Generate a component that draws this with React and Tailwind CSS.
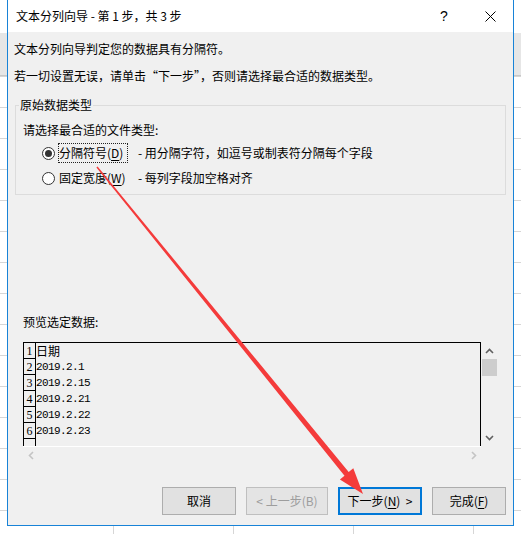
const Up = ({ c = "#606060" }) => (
  <svg width="9" height="6" viewBox="0 0 9 6"><path d="M1 5 L4.5 1.5 L8 5" stroke={c} strokeWidth="1.6" fill="none" /></svg>
);
const Down = ({ c = "#606060" }) => (
  <svg width="9" height="6" viewBox="0 0 9 6"><path d="M1 1 L4.5 4.5 L8 1" stroke={c} strokeWidth="1.6" fill="none" /></svg>
);
const Left = ({ c = "#c4c4c4" }) => (
  <svg width="6" height="9" viewBox="0 0 6 9"><path d="M5 1 L1.5 4.5 L5 8" stroke={c} strokeWidth="1.6" fill="none" /></svg>
);
const Right = ({ c = "#c4c4c4" }) => (
  <svg width="6" height="9" viewBox="0 0 6 9"><path d="M1 1 L4.5 4.5 L1 8" stroke={c} strokeWidth="1.6" fill="none" /></svg>
);

function Radio({ checked }) {
  return (
    <div className="w-[13px] h-[13px] rounded-full border border-[#333333] bg-white flex items-center justify-center shrink-0">
      {checked && <div className="w-[7px] h-[7px] rounded-full bg-[#333333]" />}
    </div>
  );
}

export default function App() {
  const rows = ["日期", "2019.2.1", "2019.2.15", "2019.2.21", "2019.2.22", "2019.2.23", ""];
  return (
    <div className="relative w-[521px] h-[534px] overflow-hidden bg-white [background-image:linear-gradient(to_bottom,#ffffff_0_33px,#e6e6e6_33px_75px,#c8c8c8_75px_76px,transparent_76px),repeating-linear-gradient(to_bottom,transparent_0_14px,#d6d6d6_14px_15px,transparent_15px_31px),repeating-linear-gradient(to_right,transparent_0_113px,#d6d6d6_113px_114px,transparent_114px_120px)] font-['Noto_Sans_CJK_SC',sans-serif] text-[12px] text-black">
      <div className="ml-[7px] w-[507px] h-[526px] border-x border-b border-[#1883d7] bg-[#f0f0f0] flex flex-col">
        {/* title bar */}
        <div className="h-[32px] bg-white flex items-center shrink-0">
          <span className="pl-[8px] leading-[16px] whitespace-pre">文本分列向导 - 第&nbsp;1&nbsp;步，共&nbsp;3&nbsp;步</span>
          <div className="ml-auto flex h-full">
            <div className="w-[46px] flex items-center justify-center font-['Liberation_Sans',sans-serif] text-[14px]">?</div>
            <div className="w-[46px] flex items-center justify-center">
              <svg width="11" height="11" viewBox="0 0 11 11">
                <path d="M0.5 0.5 L10.5 10.5 M10.5 0.5 L0.5 10.5" stroke="#000" strokeWidth="1" fill="none" />
              </svg>
            </div>
          </div>
        </div>

        {/* body */}
        <div className="pt-[9px] flex flex-col">
          <div className="pl-[6px] leading-[16px]">文本分列向导判定您的数据具有分隔符。</div>
          <div className="pl-[6px] mt-[11px] leading-[16px]">若一切设置无误，请单击“下一步”，否则请选择最合适的数据类型。</div>

          <fieldset className="mt-[13px] mx-[7px] border border-[#dcdcdc] pb-[6px]">
            <legend className="ml-[3px] px-[1px] leading-[16px]">原始数据类型</legend>
            <div className="pl-[7px]">
              <div className="mt-[9px] leading-[16px]">请选择最合适的文件类型:</div>
              <div className="mt-[5px] h-[20px] flex items-center ml-[19px]">
                <Radio checked />
                <div className="ml-[3px] w-[70px] h-[20px] border border-dotted border-[#222222] flex items-center leading-[16px] whitespace-nowrap shrink-0">
                  分隔符号(<u className="underline-offset-2">D</u>)
                </div>
                <span className="ml-[10px] leading-[16px] whitespace-nowrap">- 用分隔字符，如逗号或制表符分隔每个字段</span>
              </div>
              <div className="mt-[5px] h-[20px] flex items-center ml-[19px]">
                <Radio />
                <div className="ml-[3px] w-[70px] h-[20px] border border-transparent flex items-center leading-[16px] whitespace-nowrap shrink-0">
                  固定宽度(<u className="underline-offset-2">W</u>)
                </div>
                <span className="ml-[10px] leading-[16px] whitespace-nowrap">- 每列字段加空格对齐</span>
              </div>
            </div>
          </fieldset>

          <div className="mt-[119px] pl-[15px] leading-[16px]">预览选定数据:</div>

          {/* preview control */}
          <div className="mt-[12px] ml-[15px] flex flex-col w-[475px]">
            <div className="flex">
              <div className="w-[458px] h-[104px] border-t border-x border-black overflow-hidden">
                {rows.map((r, i) => (
                  <div key={i} className="flex h-[16px]">
                    <div className="w-[12px] h-[16px] border-r border-b border-black flex items-end justify-center font-['Liberation_Serif',serif] text-[12px] leading-[13px] shrink-0">
                      {i < 6 ? i + 1 : ""}
                    </div>
                    {i === 0 ? (
                      <span className="leading-[16px] text-[12px]">{r}</span>
                    ) : (
                      <span className="leading-[16px] font-['Liberation_Mono',monospace] text-[11px] tracking-[-0.6px]">{r}</span>
                    )}
                  </div>
                ))}
              </div>
              <div className="w-[17px] h-[104px] flex flex-col items-center">
                <div className="h-[17px] flex items-center justify-center"><Up /></div>
                <div className="w-[15px] h-[17px] bg-[#cdcdcd]" />
                <div className="flex-1" />
                <div className="h-[17px] flex items-center justify-center"><Down /></div>
              </div>
            </div>
            <div className="flex">
              <div className="w-[458px] h-[17px] border-t border-white flex items-center justify-between pl-[5px] pr-[4px]">
                <Left />
                <Right />
              </div>
            </div>
          </div>

          {/* buttons */}
          <div className="mt-[24px] flex justify-end gap-[10px] pr-[7px]">
            <div className="w-[74px] h-[28px] bg-[#e1e1e1] border border-[#adadad] flex items-center justify-center">取消</div>
            <div className="w-[82px] h-[28px] bg-[#e4e4e4] border border-[#bfbfbf] flex items-center justify-center text-[#9d9d9d]">&lt; 上一步(B)</div>
            <div className="w-[84px] h-[28px] bg-[#e1e1e1] border-2 border-[#0078d7] flex items-center justify-center">
              下一步(<u className="underline-offset-2">N</u>)&nbsp;&nbsp;&gt;
            </div>
            <div className="w-[74px] h-[28px] bg-[#e1e1e1] border border-[#adadad] flex items-center justify-center">
              完成(<u className="underline-offset-2">F</u>)
            </div>
          </div>
        </div>
      </div>

      {/* red annotation arrow */}
      <svg className="absolute left-0 top-0 pointer-events-none" width="521" height="534" viewBox="0 0 521 534">
        <polygon
          points="96.4,167.5 97.6,166.5 348.7,471.9 353.3,468.2 363,494 339.9,479.4 344.5,475.7"
          fill="#f43b3b"
        />
      </svg>
    </div>
  );
}
